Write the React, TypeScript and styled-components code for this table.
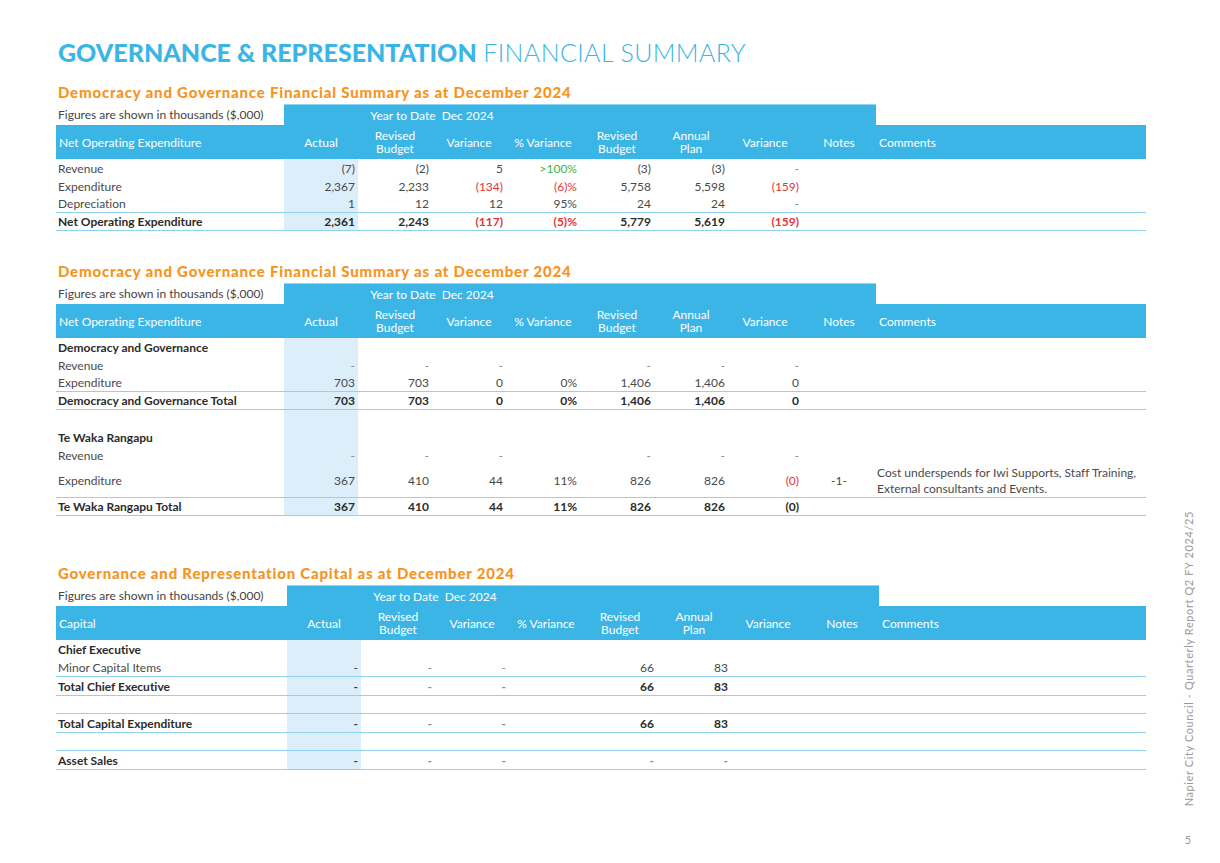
import React from "react";
import styled, { createGlobalStyle } from "styled-components";

const Global = createGlobalStyle`
  html, body { margin: 0; padding: 0; background: #ffffff; }
  body {
    font-family: "Lato", "Open Sans", sans-serif;
    color: #444;
    font-variant-ligatures: no-common-ligatures;
  }
  * { box-sizing: border-box; }
`;

const BLUE = "#3bb5e6";
const LINE = "#8fd3f1";
const SHADE = "#dbeef9";
const ORANGE = "#f7941d";
const RED = "#e8323c";
const GREEN = "#3cb54a";

const Page = styled.div`
  width: 1220px;
  height: 863px;
  display: flex;
  overflow: hidden;
`;

const Main = styled.div`
  flex: 1;
  padding: 35px 0 0 56px;
`;

const Side = styled.div`
  width: 50px;
  display: flex;
  flex-direction: column;
  align-items: center;
  padding: 0 14px 17px 0;
  justify-content: flex-end;
  color: #9a9a9a;
  font-size: 11px;
`;

const SideText = styled.div`
  writing-mode: vertical-rl;
  transform: rotate(180deg);
  letter-spacing: 0.6px;
  margin-bottom: 27px;
`;

const PageNo = styled.div`
  font-size: 11px;
`;

const Title = styled.h1`
  margin: 0 0 0 2px;
  font-size: 25px;
  line-height: 34px;
  color: ${BLUE};
  font-weight: 400;
  white-space: nowrap;
`;

const TitleBold = styled.span`
  font-weight: 900;
`;

const TitleLight = styled.span`
  font-weight: 300;
  letter-spacing: 0.4px;
`;

const SectionTitle = styled.h2<{ $top: number }>`
  margin: ${(p) => p.$top}px 0 4px 2px;
  font-size: 15px;
  line-height: 16px;
  font-weight: 900;
  color: ${ORANGE};
  letter-spacing: 0.8px;
  white-space: nowrap;
`;

const Table = styled.div`
  width: 1090px;
  font-size: 12px;
`;

const Grid = styled.div<{ $label: number }>`
  display: grid;
  grid-template-columns: ${(p) => p.$label}px repeat(8, 74px) ${(p) => 1090 - p.$label - 592}px;
`;

const BandRow = styled(Grid)`
  height: 21px;
  align-items: stretch;
`;

const BandNote = styled.div`
  padding-left: 2px;
  display: flex;
  align-items: center;
  color: #444;
  white-space: nowrap;
`;

const BandCell = styled.div<{ $span: number }>`
  grid-column: span ${(p) => p.$span};
  background: ${BLUE};
  border-top: 1px solid #8fd6f3;
  color: #fff;
  display: flex;
  align-items: center;
  justify-content: center;
  padding-top: 1px;
  white-space: nowrap;
`;

const HeadRow = styled(Grid)`
  height: 34px;
  background: ${BLUE};
  color: #fff;
`;

const HeadCell = styled.div<{ $align?: "left" | "center" }>`
  display: flex;
  align-items: center;
  justify-content: ${(p) => (p.$align === "left" ? "flex-start" : "center")};
  text-align: ${(p) => p.$align ?? "center"};
  padding-left: ${(p) => (p.$align === "left" ? "3px" : "0")};
  line-height: 13px;
  font-size: 12px;
  white-space: nowrap;
`;

const BodyRow = styled(Grid)<{ $h: number; $line: boolean }>`
  height: ${(p) => p.$h}px;
  border-bottom: ${(p) => (p.$line ? `1px solid ${LINE}` : "none")};
`;

const LabelCell = styled.div<{ $bold: boolean }>`
  display: flex;
  align-items: center;
  padding-left: 2px;
  font-weight: ${(p) => (p.$bold ? 700 : 400)};
  color: ${(p) => (p.$bold ? "#2b2b2b" : "#4a4a4a")};
  white-space: nowrap;
`;

const ValueCell = styled.div<{ $bold: boolean; $tone: string; $shade: boolean }>`
  display: flex;
  align-items: center;
  justify-content: flex-end;
  padding-right: 3px;
  background: ${(p) => (p.$shade ? SHADE : "transparent")};
  font-weight: ${(p) => (p.$bold ? 700 : 400)};
  color: ${(p) =>
    p.$tone === "red"
      ? RED
      : p.$tone === "green"
      ? GREEN
      : p.$tone === "dark"
      ? "#3a3a3a"
      : p.$tone === "dash"
      ? "#8a8a8a"
      : p.$bold
      ? "#2b2b2b"
      : "#4a4a4a"};
  white-space: nowrap;
`;

const NoteCell = styled.div`
  display: flex;
  align-items: center;
  justify-content: center;
  color: #4a4a4a;
`;

const CommentCell = styled.div`
  display: flex;
  align-items: center;
  padding-left: 1px;
  line-height: 16px;
  color: #4a4a4a;
`;

type Row = {
  label: string;
  kind: "section" | "item" | "total" | "blank";
  values?: string[];
  line?: boolean;
  note?: string;
  comment?: React.ReactNode;
  h?: number;
};

function tone(v: string): string {
  if (v.startsWith("r:")) return "red";
  if (v.startsWith("g:")) return "green";
  if (v.startsWith("d:")) return "dark";
  if (v === "-") return "dash";
  return "";
}
function txt(v: string): string {
  return v.replace(/^[rgd]:/, "");
}

const FinTable: React.FC<{ first: string; label: number; rows: Row[] }> = ({ first, label, rows }) => (
  <Table>
    <BandRow $label={label}>
      <BandNote>Figures are shown in thousands ($,000)</BandNote>
      <BandCell $span={4}>Year to Date&nbsp; Dec 2024</BandCell>
      <BandCell $span={4} />
      <div />
    </BandRow>
    <HeadRow $label={label}>
      <HeadCell $align="left">{first}</HeadCell>
      <HeadCell>Actual</HeadCell>
      <HeadCell>
        Revised
        <br />
        Budget
      </HeadCell>
      <HeadCell>Variance</HeadCell>
      <HeadCell>% Variance</HeadCell>
      <HeadCell>
        Revised
        <br />
        Budget
      </HeadCell>
      <HeadCell>
        Annual
        <br />
        Plan
      </HeadCell>
      <HeadCell>Variance</HeadCell>
      <HeadCell>Notes</HeadCell>
      <HeadCell $align="left">Comments</HeadCell>
    </HeadRow>
    {rows.map((r, i) => {
      const bold = r.kind === "section" || r.kind === "total";
      const vals = r.values ?? ["", "", "", "", "", "", ""];
      return (
        <BodyRow key={i} $label={label} $h={r.h ?? 18} $line={!!r.line}>
          <LabelCell $bold={bold}>{r.label}</LabelCell>
          {vals.map((v, j) => (
            <ValueCell key={j} $bold={r.kind === "total"} $tone={tone(v)} $shade={j === 0}>
              {txt(v)}
            </ValueCell>
          ))}
          <NoteCell>{r.note}</NoteCell>
          <CommentCell>{r.comment}</CommentCell>
        </BodyRow>
      );
    })}
  </Table>
);

const t1: Row[] = [
  { label: "Revenue", kind: "item", values: ["(7)", "(2)", "5", "g:>100%", "(3)", "(3)", "-"] },
  { label: "Expenditure", kind: "item", values: ["2,367", "2,233", "r:(134)", "r:(6)%", "5,758", "5,598", "r:(159)"] },
  { label: "Depreciation", kind: "item", values: ["1", "12", "12", "95%", "24", "24", "-"], line: true },
  { label: "Net Operating Expenditure", kind: "total", values: ["2,361", "2,243", "r:(117)", "r:(5)%", "5,779", "5,619", "r:(159)"], line: true },
];

const t2: Row[] = [
  { label: "Democracy and Governance", kind: "section" },
  { label: "Revenue", kind: "item", values: ["-", "-", "-", "", "-", "-", "-"] },
  { label: "Expenditure", kind: "item", values: ["703", "703", "0", "0%", "1,406", "1,406", "0"], line: true },
  { label: "Democracy and Governance Total", kind: "total", values: ["703", "703", "0", "0%", "1,406", "1,406", "0"], line: true },
  { label: "", kind: "blank" },
  { label: "Te Waka Rangapu", kind: "section" },
  { label: "Revenue", kind: "item", values: ["-", "-", "-", "", "-", "-", "-"] },
  {
    label: "Expenditure",
    kind: "item",
    values: ["367", "410", "44", "11%", "826", "826", "r:(0)"],
    note: "-1-",
    comment: (
      <span>
        Cost underspends for Iwi Supports, Staff Training,
        <br />
        External consultants and Events.
      </span>
    ),
    h: 34,
    line: true,
  },
  { label: "Te Waka Rangapu Total", kind: "total", values: ["367", "410", "44", "11%", "826", "826", "(0)"], line: true },
];

const t3: Row[] = [
  { label: "Chief Executive", kind: "section" },
  { label: "Minor Capital Items", kind: "item", values: ["d:-", "-", "-", "", "66", "83", ""], line: true, h: 19 },
  { label: "Total Chief Executive", kind: "total", values: ["d:-", "-", "-", "", "66", "83", ""], line: true, h: 19 },
  { label: "", kind: "blank", line: true },
  { label: "Total Capital Expenditure", kind: "total", values: ["d:-", "-", "-", "", "66", "83", ""], line: true, h: 19 },
  { label: "", kind: "blank", line: true },
  { label: "Asset Sales", kind: "total", values: ["d:-", "-", "-", "", "-", "-", ""], line: true, h: 19 },
];

export default function App() {
  return (
    <Page>
      <Global />
      <Main>
        <Title>
          <TitleBold>GOVERNANCE &amp; REPRESENTATION</TitleBold> <TitleLight>FINANCIAL SUMMARY</TitleLight>
        </Title>
        <SectionTitle $top={15}>Democracy and Governance Financial Summary as at December 2024</SectionTitle>
        <FinTable first="Net Operating Expenditure" label={228} rows={t1} />
        <SectionTitle $top={32}>Democracy and Governance Financial Summary as at December 2024</SectionTitle>
        <FinTable first="Net Operating Expenditure" label={228} rows={t2} />
        <SectionTitle $top={49}>Governance and Representation Capital as at December 2024</SectionTitle>
        <FinTable first="Capital" label={231} rows={t3} />
      </Main>
      <Side>
        <SideText>Napier City Council - Quarterly Report Q2 FY 2024/25</SideText>
        <PageNo>5</PageNo>
      </Side>
    </Page>
  );
}
